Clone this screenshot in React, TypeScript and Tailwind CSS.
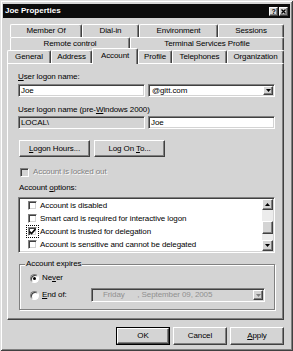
import React from 'react';

const raised =
  'border border-t-white border-l-white border-r-[#404040] border-b-[#404040] shadow-[inset_-1px_-1px_0_#808080]';
const sunken =
  'border border-t-[#808080] border-l-[#808080] border-r-white border-b-white shadow-[inset_1px_1px_0_#404040,inset_-1px_-1px_0_#d4d4d4]';

function Arrow({ up, disabled }: { up?: boolean; disabled?: boolean }) {
  return (
    <svg width="5" height="3" viewBox="0 0 5 3">
      <path d={up ? 'M2.5 0L5 3H0z' : 'M0 0h5L2.5 3z'} fill={disabled ? '#808080' : '#000'} />
    </svg>
  );
}

function ArrowBtn({ up, disabled, className }: { up?: boolean; disabled?: boolean; className: string }) {
  return (
    <div className={`${raised} bg-[#d4d4d4] flex items-center justify-center shrink-0 ${className}`}>
      <Arrow up={up} disabled={disabled} />
    </div>
  );
}

function Tab({ label, className, active }: { label: string; className: string; active?: boolean }) {
  return (
    <div
      className={`${className} shrink-0 border-t border-l border-r border-t-white border-l-white border-r-[#404040] rounded-t-[2px] shadow-[inset_-1px_0_0_#808080] bg-[#d4d4d4] flex items-center justify-center leading-none ${
        active ? 'h-[16px] -mb-[1px] relative z-10 pb-[2px]' : 'h-[13px]'
      }`}
    >
      {label}
    </div>
  );
}

function Check({ checked, disabled, focus }: { checked?: boolean; disabled?: boolean; focus?: boolean }) {
  return (
    <div className={`p-[1px] ${focus ? 'outline outline-1 outline-dotted outline-black' : ''}`}>
      <div className={`w-[9px] h-[9px] ${sunken} ${disabled ? 'bg-[#d4d4d4]' : 'bg-white'} flex items-center justify-center`}>
        {checked && (
          <svg width="7" height="7" viewBox="0 0 7 7">
            <path d="M0.5 3.5L2.5 5.5L6.5 1" stroke="#000" strokeWidth="1.6" fill="none" />
          </svg>
        )}
      </div>
    </div>
  );
}

function Radio({ checked }: { checked?: boolean }) {
  return (
    <div className="w-[9px] h-[9px] rounded-full border border-t-[#808080] border-l-[#808080] border-r-white border-b-white bg-white flex items-center justify-center shadow-[inset_1px_1px_0_#404040]">
      {checked && <div className="w-[3px] h-[3px] rounded-full bg-black" />}
    </div>
  );
}

function Button({ children, className, def }: { children: React.ReactNode; className: string; def?: boolean }) {
  if (def) {
    return (
      <div className={`${className} border border-black flex`}>
        <div className={`${raised} flex-1 bg-[#d4d4d4] flex items-center justify-center`}>{children}</div>
      </div>
    );
  }
  return <div className={`${className} ${raised} bg-[#d4d4d4] flex items-center justify-center`}>{children}</div>;
}

const options = [
  { label: 'Account is disabled' },
  { label: 'Smart card is required for interactive logon' },
  { label: 'Account is trusted for delegation', checked: true },
  { label: 'Account is sensitive and cannot be delegated' },
];

export default function App() {
  return (
    <div className="w-[293px] h-[351px] bg-[#d4d4d4] flex flex-col text-[8px] tracking-[-0.1px] text-black font-['Liberation_Sans',Arial,sans-serif] shadow-[inset_1px_1px_0_#e0e0e0,inset_-1px_-1px_0_#404040,inset_2px_2px_0_#fff,inset_-2px_-2px_0_#808080] overflow-hidden">
      {/* title bar */}
      <div className="mt-[4px] mx-[3px] h-[14px] bg-[#0c0c0c] flex items-center pl-[2px] pr-[2px]">
        <span className="text-white font-bold text-[8px] tracking-normal">Joe Properties</span>
        <div className="ml-auto flex gap-[1px]">
          <div className={`${raised} w-[9px] h-[9px] bg-[#d4d4d4] flex items-center justify-center font-bold text-[7px] leading-none`}>?</div>
          <div className={`${raised} w-[9px] h-[9px] bg-[#d4d4d4] flex items-center justify-center`}>
            <svg width="5" height="5" viewBox="0 0 5 5">
              <path d="M0.5 0.5L4.5 4.5M4.5 0.5L0.5 4.5" stroke="#000" strokeWidth="1.3" />
            </svg>
          </div>
        </div>
      </div>

      {/* tabs */}
      <div className="mt-[6px] ml-[10px] flex w-[274px]">
        <Tab label="Member Of" className="w-[72px]" />
        <Tab label="Dial-in" className="w-[57px]" />
        <Tab label="Environment" className="w-[79px]" />
        <Tab label="Sessions" className="w-[66px]" />
      </div>
      <div className="ml-[10px] flex w-[274px]">
        <Tab label="Remote control" className="w-[120px]" />
        <Tab label="Terminal Services Profile" className="w-[154px]" />
      </div>
      <div className="ml-[7px] flex items-end h-[13px] w-[277px]">
        <Tab label="General" className="w-[44px]" />
        <Tab label="Address" className="w-[41px]" />
        <Tab label="Account" className="w-[46px]" active />
        <Tab label="Profile" className="w-[34px]" />
        <Tab label="Telephones" className="w-[55px]" />
        <Tab label="Organization" className="w-[57px]" />
      </div>

      {/* panel */}
      <div className={`ml-[7px] w-[277px] h-[257px] ${raised} flex flex-col pl-[10px]`}>
        <div className="mt-[8px] h-[10px] leading-[10px]">
          <u>U</u>ser logon name:
        </div>
        <div className="mt-[2px] flex gap-[3px] w-[257px]">
          <div className={`w-[127px] h-[13px] ${sunken} bg-white pl-[2px] leading-[11px]`}>Joe</div>
          <div className={`w-[127px] h-[13px] ${sunken} bg-white pl-[2px] leading-[11px] flex p-[1px]`}>
            <span className="flex-1 pl-[1px] leading-[9px]">@gitt.com</span>
            <ArrowBtn className="w-[10px] h-[9px]" />
          </div>
        </div>

        <div className="mt-[8px] h-[10px] leading-[10px]">
          User logon name (pre-<u>W</u>indows 2000)
        </div>
        <div className="mt-[1px] flex gap-[3px] w-[257px]">
          <div className={`w-[127px] h-[13px] ${sunken} bg-[#d4d4d4] pl-[2px] leading-[11px]`}>LOCAL\</div>
          <div className={`w-[127px] h-[13px] ${sunken} bg-white pl-[2px] leading-[11px]`}>Joe</div>
        </div>

        <div className="mt-[11px] flex gap-[4px] ml-[1px]">
          <Button className="w-[71px] h-[17px]">
            <span>
              <u>L</u>ogon Hours...
            </span>
          </Button>
          <Button className="w-[71px] h-[17px]">
            <span>
              Log On <u>T</u>o...
            </span>
          </Button>
        </div>

        <div className="mt-[10px] h-[10px] flex items-center gap-[3px] ml-[1px]">
          <Check disabled />
          <span className="text-[#808080] [text-shadow:1px_1px_0_#fff]">Account is locked out</span>
        </div>

        <div className="mt-[6px] h-[10px] leading-[10px] ml-[1px]">
          Account <u>o</u>ptions:
        </div>

        <div className={`mt-[4px] w-[257px] h-[56px] ${sunken} bg-white flex`}>
          <div className="flex-1 flex flex-col pt-[1px] pl-[8px]">
            {options.map((o) => (
              <div key={o.label} className="h-[13px] flex items-center gap-[2px]">
                <Check checked={o.checked} focus={o.checked} />
                <span>{o.label}</span>
              </div>
            ))}
          </div>
          <div className="w-[11px] flex flex-col m-[1px] ml-0">
            <ArrowBtn up className="w-[11px] h-[11px]" />
            <div className="h-[11px] bg-[#ececec]" />
            <div className={`${raised} h-[13px] bg-[#d4d4d4]`} />
            <div className="flex-1 bg-[#ececec]" />
            <ArrowBtn className="w-[11px] h-[11px]" />
          </div>
        </div>

        {/* group box */}
        <div className="mt-[11px] ml-[1px] w-[256px] h-[46px] relative border border-[#808080] shadow-[inset_1px_1px_0_#fff,1px_1px_0_#fff] flex flex-col pl-[10px]">
          <span className="absolute -top-[6px] left-[5px] px-[1px] bg-[#d4d4d4] leading-[10px]">Account expires</span>
          <div className="mt-[8px] h-[10px] flex items-center gap-[3px]">
            <Radio checked />
            <span>
              Ne<u>v</u>er
            </span>
          </div>
          <div className="mt-[5px] h-[14px] flex items-center">
            <Radio />
            <span className="ml-[3px]">
              <u>E</u>nd of:
            </span>
            <div className={`ml-auto mr-[9px] w-[174px] h-[14px] ${sunken} bg-[#d4d4d4] flex p-[1px]`}>
              <span className="flex-1 pl-[10px] leading-[10px] text-[#909090]">
                Friday&nbsp;&nbsp;&nbsp;&nbsp;&nbsp;&nbsp;, September 09, 2005
              </span>
              <ArrowBtn disabled className="w-[10px] h-[10px]" />
            </div>
          </div>
        </div>
      </div>

      {/* dialog buttons */}
      <div className="mt-[7px] flex justify-end gap-[3px] pr-[9px]">
        <Button def className="w-[54px] h-[18px]">
          OK
        </Button>
        <Button className="w-[54px] h-[18px]">Cancel</Button>
        <Button className="w-[54px] h-[18px]">
          <span>
            <u>A</u>pply
          </span>
        </Button>
      </div>
    </div>
  );
}
